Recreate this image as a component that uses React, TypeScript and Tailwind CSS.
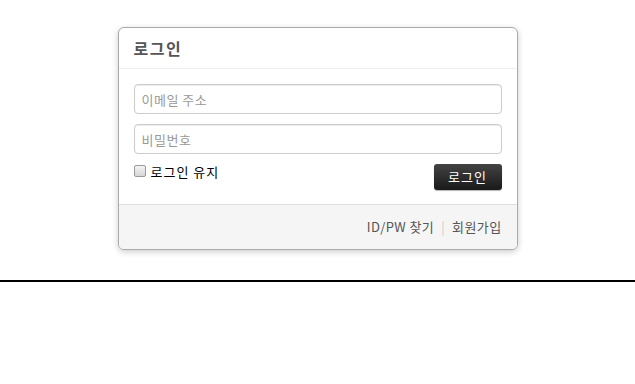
export default function App() {
  return (
    <div
      className="min-h-[384px] bg-white pt-[27px]"
      style={{ fontFamily: '"Noto Sans CJK KR", "Noto Sans", sans-serif' }}
    >
      {/* Login card */}
      <div className="mx-auto w-[400px] overflow-hidden rounded-[6px] border border-[#aaa] bg-white shadow-[0_2px_6px_rgba(0,0,0,0.2)]">
        <div className="flex h-[41px] items-center border-b border-[#eee] px-[15px]">
          <h1 className="text-[16px] font-bold tracking-[1.5px] text-[#555]">로그인</h1>
        </div>

        <div className="px-[15px] pt-[15px] pb-[14px]">
          <input
            type="text"
            placeholder="이메일 주소"
            className="block h-[30px] w-full rounded-[4px] border border-[#ccc] px-[7px] text-[13px] tracking-[0.5px] text-[#333] shadow-[inset_0_1px_1px_rgba(0,0,0,0.08)] placeholder:text-[#999] outline-none"
          />
          <input
            type="password"
            placeholder="비밀번호"
            className="mt-[10px] block h-[30px] w-full rounded-[4px] border border-[#ccc] px-[7px] text-[13px] tracking-[0.5px] text-[#333] shadow-[inset_0_1px_1px_rgba(0,0,0,0.08)] placeholder:text-[#999] outline-none"
          />
          <div className="mt-[10px] flex items-start justify-between">
            <label className="-mt-[2px] flex items-center gap-[5px] text-[13px] tracking-[1px] text-black">
              <span className="-mt-[2px] block h-[12px] w-[12px] rounded-[2px] border border-[#999] bg-gradient-to-b from-[#f4f4f4] to-[#d6d6d6]" />
              로그인 유지
            </label>
            <button className="h-[26px] w-[68px] rounded-[3px] bg-gradient-to-b from-[#444] to-[#1a1a1a] text-[13px] tracking-[1px] text-white shadow-[0_1px_1px_rgba(0,0,0,0.3)]">
              로그인
            </button>
          </div>
        </div>

        <div className="flex h-[45px] items-center justify-end border-t border-[#ddd] bg-[#f5f5f5] px-[15px] text-[13px] tracking-[0.4px] text-[#555]">
          <a>ID/PW 찾기</a>
          <span className="mx-[7px] text-[#ccc]">|</span>
          <a>회원가입</a>
        </div>
      </div>

      <div className="mt-[30px] border-t-2 border-black" />
    </div>
  );
}
